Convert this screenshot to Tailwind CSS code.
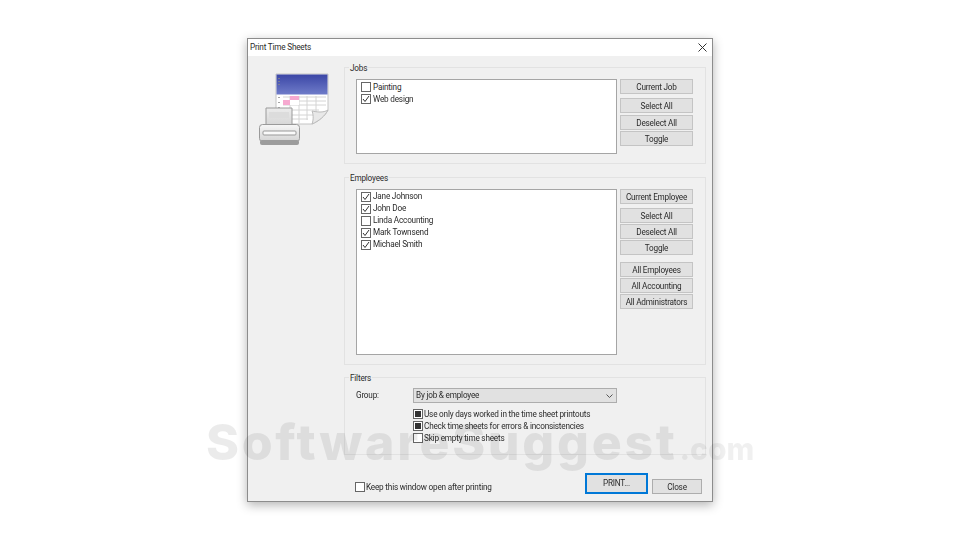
<!DOCTYPE html>
<html lang="en">
<head>
  <meta charset="UTF-8" />
  <title>Print Time Sheets</title>
  <script src="https://cdn.jsdelivr.net/npm/@tailwindcss/browser@4"></script>
</head>
<body class="relative w-[960px] h-[540px] overflow-hidden bg-white font-['Roboto',sans-serif] text-[8.2px] tracking-[-0.2px] text-[#2b2b2b] whitespace-nowrap">

  <div class="pt-[38px] pl-[247px]">
    <!-- Dialog -->
    <div class="w-[466px] h-[464px] flex flex-col bg-[#f0f0f0] border border-[#8c8c8c] shadow-[0_3px_10px_rgba(0,0,0,0.3)] blur-[0.3px]">
      <div class="h-[17px] shrink-0 bg-white flex items-center justify-between pl-[2px] pr-[5px]">
        <span>Print Time Sheets</span>
        <svg class="w-[9px] h-[9px]" viewBox="0 0 9 9" fill="none" stroke="#333" stroke-width="1"><path d="M0.5 0.5l8 8M8.5 0.5l-8 8"/></svg>
      </div>

      <div class="flex flex-1">
        <!-- Printer + sheet icon -->
        <div class="w-[96px] shrink-0 pt-[9px] pl-[2px]">
          <svg class="w-[90px] h-[90px]" viewBox="0 0 90 90">
            <defs>
              <linearGradient id="head" x1="0" y1="0" x2="0" y2="1"><stop offset="0" stop-color="#3b46a6"/><stop offset="1" stop-color="#6f7cc9"/></linearGradient>
              <linearGradient id="body" x1="0" y1="0" x2="0" y2="1"><stop offset="0" stop-color="#f7f7f7"/><stop offset="1" stop-color="#d4d4d4"/></linearGradient>
              <linearGradient id="paper" x1="0" y1="0" x2="0" y2="1"><stop offset="0" stop-color="#ececec"/><stop offset="1" stop-color="#d0d0d0"/></linearGradient>
            </defs>
            <path d="M26 9h52v36c-3 6-9 11-16 14H26z" fill="#fff" stroke="#c4c4c4"/>
            <rect x="26.500" y="9.500" width="51" height="20" fill="url(#head)"/>
            <path d="M33 32h43M33 36h43M33 40h43M33 45h36M33 50h30M33 54h25M40 31v27M49 31v27M57 31v24M66 31v18" stroke="#d4d4d4" stroke-width="1" fill="none"/>
            <rect x="40" y="31" width="9" height="4" fill="#f6a9d0"/>
            <rect x="33" y="35" width="7" height="5" fill="#f6a9d0"/>
            <rect x="40" y="35" width="9" height="5" fill="#fff"/>
            <path d="M62 59c2-5 1-11 0-13 5 1 11 2 16-1-3 6-9 11-16 14z" fill="#e8e8e8" stroke="#bbb"/>
            <path d="M29 13v1M29 16v1M29 19v1M29 32v1M29 37v1M29 42v1" stroke="#888" stroke-width="1.500"/>
            <path d="M16 43h26v22H16z" fill="url(#paper)" stroke="#9a9a9a"/>
            <rect x="19" y="47" width="20" height="6" fill="#dcdcdc"/>
            <rect x="9.500" y="59.500" width="40" height="17" rx="3" fill="url(#body)" stroke="#9a9a9a"/>
            <rect x="13" y="66" width="33" height="4" rx="1" fill="#fafafa" stroke="#999"/>
            <rect x="10" y="75" width="39" height="5" rx="2" fill="#9c9c9c"/>
          </svg>
        </div>

        <div class="w-[362px] pt-[11px] flex flex-col">
          <!-- Jobs -->
          <div class="relative h-[97px] border border-[#e2e2e2] pt-[11px] pl-[11px] flex">
            <span class="absolute -top-[6px] left-[4px] bg-[#f0f0f0] px-[1px]">Jobs</span>
            <div class="w-[261px] h-[75px] bg-white border border-[#a5a5a5] pt-[1px] pl-[4px]">
              <label class="flex items-center gap-[2px] h-[12px]"><span class="w-[10px] h-[10px] border border-[#666] bg-white"></span>Painting</label>
              <label class="flex items-center gap-[2px] h-[12px]"><span class="w-[10px] h-[10px] border border-[#666] bg-white flex items-center justify-center"><svg class="w-[8px] h-[8px]" viewBox="0 0 8 8" fill="none" stroke="#333"><path d="M1 4l2 2.500L7 1"/></svg></span>Web design</label>
            </div>
            <div class="ml-[3px] w-[73px] flex flex-col">
              <button class="h-[15px] pt-px bg-[#e1e1e1] border border-[#c4c4c4] mb-[4px]">Current Job</button>
              <div class="flex flex-col gap-[1.5px]">
                <button class="h-[15px] pt-px bg-[#e1e1e1] border border-[#c4c4c4]">Select All</button>
                <button class="h-[15px] pt-px bg-[#e1e1e1] border border-[#c4c4c4]">Deselect All</button>
                <button class="h-[15px] pt-px bg-[#e1e1e1] border border-[#c4c4c4]">Toggle</button>
              </div>
            </div>
          </div>

          <!-- Employees -->
          <div class="relative h-[188px] mt-[13px] border border-[#e2e2e2] pt-[11px] pl-[11px] flex">
            <span class="absolute -top-[6px] left-[4px] bg-[#f0f0f0] px-[1px]">Employees</span>
            <div class="w-[261px] h-[166px] bg-white border border-[#a5a5a5] pt-[0.5px] pl-[4px]">
              <label class="flex items-center gap-[2px] h-[12px]"><span class="w-[10px] h-[10px] border border-[#666] bg-white flex items-center justify-center"><svg class="w-[8px] h-[8px]" viewBox="0 0 8 8" fill="none" stroke="#333"><path d="M1 4l2 2.500L7 1"/></svg></span>Jane Johnson</label>
              <label class="flex items-center gap-[2px] h-[12px]"><span class="w-[10px] h-[10px] border border-[#666] bg-white flex items-center justify-center"><svg class="w-[8px] h-[8px]" viewBox="0 0 8 8" fill="none" stroke="#333"><path d="M1 4l2 2.500L7 1"/></svg></span>John Doe</label>
              <label class="flex items-center gap-[2px] h-[12px]"><span class="w-[10px] h-[10px] border border-[#666] bg-white"></span>Linda Accounting</label>
              <label class="flex items-center gap-[2px] h-[12px]"><span class="w-[10px] h-[10px] border border-[#666] bg-white flex items-center justify-center"><svg class="w-[8px] h-[8px]" viewBox="0 0 8 8" fill="none" stroke="#333"><path d="M1 4l2 2.500L7 1"/></svg></span>Mark Townsend</label>
              <label class="flex items-center gap-[2px] h-[12px]"><span class="w-[10px] h-[10px] border border-[#666] bg-white flex items-center justify-center"><svg class="w-[8px] h-[8px]" viewBox="0 0 8 8" fill="none" stroke="#333"><path d="M1 4l2 2.500L7 1"/></svg></span>Michael Smith</label>
            </div>
            <div class="ml-[3px] w-[73px] flex flex-col">
              <button class="h-[15px] pt-px bg-[#e1e1e1] border border-[#c4c4c4] mb-[4px]">Current Employee</button>
              <div class="flex flex-col gap-[1px] mb-[7px]">
                <button class="h-[15px] pt-px bg-[#e1e1e1] border border-[#c4c4c4]">Select All</button>
                <button class="h-[15px] pt-px bg-[#e1e1e1] border border-[#c4c4c4]">Deselect All</button>
                <button class="h-[15px] pt-px bg-[#e1e1e1] border border-[#c4c4c4]">Toggle</button>
              </div>
              <div class="flex flex-col gap-[1px]">
                <button class="h-[15px] pt-px bg-[#e1e1e1] border border-[#c4c4c4]">All Employees</button>
                <button class="h-[15px] pt-px bg-[#e1e1e1] border border-[#c4c4c4]">All Accounting</button>
                <button class="h-[15px] pt-px bg-[#e1e1e1] border border-[#c4c4c4]">All Administrators</button>
              </div>
            </div>
          </div>

          <!-- Filters -->
          <div class="relative h-[78px] mt-[12px] border border-[#e2e2e2] pt-[10px] pl-[11px]">
            <span class="absolute -top-[6px] left-[4px] bg-[#f0f0f0] px-[1px]">Filters</span>
            <div class="flex items-center h-[15px]">
              <span class="w-[57px]">Group:</span>
              <div class="w-[204px] h-[15px] bg-[#e1e1e1] border border-[#adadad] flex items-center justify-between pl-[2px] pr-[3px]">
                <span>By job &amp; employee</span>
                <svg class="w-[7px] h-[4px]" viewBox="0 0 7 4" fill="none" stroke="#555"><path d="M0.5 0.500l3 3 3-3"/></svg>
              </div>
            </div>
            <div class="ml-[57px] mt-[6px] flex flex-col gap-[1.500px]">
              <label class="flex items-center gap-px h-[10.500px]"><span class="w-[10px] h-[10px] border border-[#666] bg-white flex items-center justify-center"><span class="w-[6px] h-[6px] bg-[#333]"></span></span>Use only days worked in the time sheet printouts</label>
              <label class="flex items-center gap-px h-[10.500px]"><span class="w-[10px] h-[10px] border border-[#666] bg-white flex items-center justify-center"><span class="w-[6px] h-[6px] bg-[#333]"></span></span>Check time sheets for errors &amp; inconsistencies</label>
              <label class="flex items-center gap-px h-[10.500px]"><span class="w-[10px] h-[10px] border border-[#666] bg-white"></span>Skip empty time sheets</label>
            </div>
          </div>

          <!-- Bottom row -->
          <div class="relative flex items-end pl-[11px] mt-[18px]">
            <label class="flex items-center gap-px h-[12px] w-[230px] mb-[1px]"><span class="w-[10px] h-[10px] border border-[#666] bg-white"></span>Keep this window open after printing</label>
            <button class="w-[63px] h-[21px] bg-[#e1e1e1] border-2 border-[#0078d7]">PRINT...</button>
            <button class="ml-[4px] w-[50px] h-[15px] pt-px bg-[#e1e1e1] border border-[#adadad]">Close</button>
          </div>
        </div>
      </div>
    </div>
  </div>

  <!-- Watermark -->
  <div class="absolute left-[206px] top-[410px] flex items-baseline font-['Inter',sans-serif] font-extrabold text-black/[0.08] pointer-events-none">
    <span class="text-[50px] leading-[64px] tracking-[2.7px]">SoftwareSuggest</span><span class="ml-[2px] text-[30px] leading-[64px] tracking-normal text-black/[0.06]">.com</span>
  </div>
</body>
</html>
